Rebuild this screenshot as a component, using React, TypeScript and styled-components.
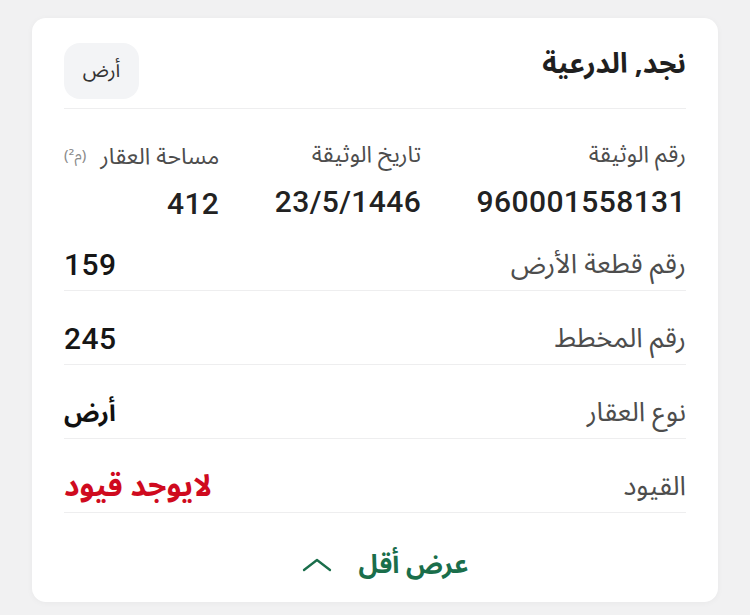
import React from "react";
import styled, { createGlobalStyle } from "styled-components";

const Global = createGlobalStyle`
  html, body { margin: 0; padding: 0; background: #f1f1f2; }
  body { font-family: "Noto Sans Arabic", "DejaVu Sans", "Noto Sans", sans-serif; }
  * { box-sizing: border-box; }
`;

const Page = styled.div`
  width: 750px;
  height: 615px;
  padding: 18px 32px 0 32px;
`;

const Card = styled.section`
  direction: rtl;
  width: 686px;
  height: 584px;
  background: #ffffff;
  border-radius: 14px;
  box-shadow: 0 1px 6px rgba(0, 0, 0, 0.04);
  padding: 0 32px;
  display: flex;
  flex-direction: column;
`;

const Header = styled.header`
  display: flex;
  align-items: flex-start;
  justify-content: space-between;
  padding: 25px 0 9px 0;
  border-bottom: 1px solid #eeeeef;
`;

const Title = styled.h2`
  margin: 2px 0 0 0;
  font-size: 28px;
  font-weight: 700;
  color: #1f1f1f;
  line-height: 40px;
`;

const Badge = styled.span`
  display: inline-flex;
  align-items: center;
  justify-content: center;
  width: 75px;
  height: 56px;
  background: #f3f4f6;
  border-radius: 16px;
  font-size: 20px;
  color: #333;
`;

const Columns = styled.div`
  display: flex;
  justify-content: space-between;
  padding-top: 32px;
`;

const Column = styled.div`
  display: flex;
  flex-direction: column;
  align-items: flex-start;
  gap: 20px;
`;

const Label = styled.span<{ $size?: number }>`
  font-size: ${(p) => p.$size ?? 23}px;
  line-height: 28px;
  color: #4d4d4d;
  white-space: nowrap;
`;

const Unit = styled.span`
  font-size: 15px;
  color: #8a8a8a;
  margin-right: 14px;
  vertical-align: 4px;
`;

const Num = styled.span`
  font-family: Roboto, "Noto Sans", sans-serif;
  font-size: 30px;
  font-weight: 500;
  line-height: 26px;
  color: #222222;
  letter-spacing: 0.4px;
  direction: ltr;
`;

const Row = styled.div`
  display: flex;
  align-items: center;
  justify-content: space-between;
  padding: 34px 0 11px 0;
  border-bottom: 1px solid #eeeeef;
`;

const RowValue = styled.span<{ $tone?: "red" | "dark"; $size: number }>`
  font-size: ${(p) => p.$size}px;
  font-weight: 700;
  line-height: 28px;
  color: ${(p) => (p.$tone === "red" ? "#cf0a1e" : "#111111")};
`;

const RowNum = styled(Num)`
  line-height: 28px;
  color: #161616;
`;

const Footer = styled.button`
  all: unset;
  display: flex;
  align-items: center;
  justify-content: center;
  gap: 27px;
  padding: 38px 0 23px 20px;
  font-family: inherit;
  font-size: 26px;
  font-weight: 700;
  line-height: 28px;
  color: #1a6e4b;
  cursor: pointer;
`;

const Chevron = () => (
  <svg width="30" height="14" viewBox="0 0 30 14" fill="none">
    <path d="M2 12L15 2L28 12" stroke="#1a6e4b" strokeWidth="2.3" strokeLinecap="round" strokeLinejoin="round" />
  </svg>
);

const rows: { label: string; value: string; num?: boolean; tone?: "red" | "dark"; size?: number }[] = [
  { label: "رقم قطعة الأرض", value: "159", num: true },
  { label: "رقم المخطط", value: "245", num: true },
  { label: "نوع العقار", value: "أرض", size: 25 },
  { label: "القيود", value: "لايوجد قيود", tone: "red", size: 30 },
];

export default function App() {
  return (
    <>
      <Global />
      <Page>
        <Card>
          <Header>
            <Title>نجد, الدرعية</Title>
            <Badge>أرض</Badge>
          </Header>
          <Columns>
            <Column>
              <Label>رقم الوثيقة</Label>
              <Num>960001558131</Num>
            </Column>
            <Column>
              <Label>تاريخ الوثيقة</Label>
              <Num>23/5/1446</Num>
            </Column>
            <Column>
              <Label>
                مساحة العقار<Unit>(م²)</Unit>
              </Label>
              <Num>412</Num>
            </Column>
          </Columns>
          {rows.map((r) => (
            <Row key={r.label}>
              <Label $size={27}>{r.label}</Label>
              {r.num ? (
                <RowNum>{r.value}</RowNum>
              ) : (
                <RowValue $tone={r.tone} $size={r.size ?? 26}>
                  {r.value}
                </RowValue>
              )}
            </Row>
          ))}
          <Footer>
            <span>عرض أقل</span>
            <Chevron />
          </Footer>
        </Card>
      </Page>
    </>
  );
}
